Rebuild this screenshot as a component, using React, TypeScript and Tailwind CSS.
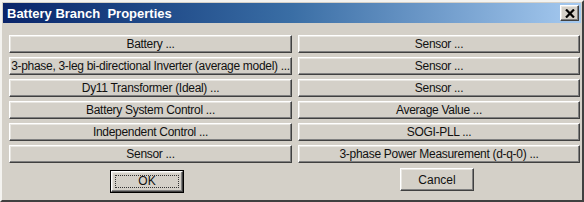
import React from 'react';

const leftItems = [
  'Battery ...',
  '3-phase, 3-leg bi-directional Inverter (average model) ...',
  'Dy11 Transformer (Ideal) ...',
  'Battery System Control ...',
  'Independent Control ...',
  'Sensor ...',
];

const rightItems = [
  'Sensor ...',
  'Sensor ...',
  'Sensor ...',
  'Average Value ...',
  'SOGI-PLL ...',
  '3-phase Power Measurement (d-q-0) ...',
];

// classic raised 3D button edge
const raised =
  'bg-[#d4d0c8] border-t border-l border-t-white border-l-white border-b border-r border-b-[#404040] border-r-[#404040] shadow-[inset_-1px_-1px_0_#808080,inset_1px_1px_0_#e8e6e1]';

function BranchButton({ label }: { label: string }) {
  return (
    <button
      className={`${raised} h-[18px] w-full flex items-center justify-center text-[12px] tracking-[-0.3px] leading-none text-[#111] whitespace-nowrap overflow-hidden`}
    >
      {label}
    </button>
  );
}

export default function App() {
  return (
    <div
      className="w-[584px] h-[202px] bg-[#d4d0c8] border-t-2 border-l-2 border-t-[#f4f3f0] border-l-[#f4f3f0] border-r-2 border-b-2 border-r-[#404040] border-b-[#404040] p-px flex flex-col"
      style={{ fontFamily: '"Liberation Sans", Arial, sans-serif' }}
    >
      {/* Title bar */}
      <div className="h-[20px] bg-gradient-to-r from-[#0a246a] via-[#3a6ea5] to-[#a6caf0] flex items-center justify-between pl-[4px] pr-[2px]">
        <span className="text-white font-bold text-[13px] leading-none whitespace-pre">
          Battery Branch  Properties
        </span>
        <button className={`${raised} w-[19px] h-[16px] flex items-center justify-center`}>
          <svg width="10" height="9" viewBox="0 0 10 9">
            <path d="M1 0.5 L9 8.5 M9 0.5 L1 8.5" stroke="#000" strokeWidth="2.2" fill="none" />
          </svg>
        </button>
      </div>

      {/* Buttons */}
      <div className="grid grid-cols-[283px_282px] gap-x-[6px] gap-y-[4px] pl-[6px] pt-[12px]">
        {leftItems.map((l, i) => (
          <React.Fragment key={i}>
            <BranchButton label={l} />
            <BranchButton label={rightItems[i]} />
          </React.Fragment>
        ))}
      </div>

      {/* OK / Cancel */}
      <div className="grid grid-cols-[283px_282px] gap-x-[6px] pl-[6px] pt-[5px]">
        <div className="pl-[101px]">
          <button className="w-[74px] h-[23px] border border-black p-0">
            <div className={`${raised} w-full h-full flex items-center justify-center p-[3px]`}>
              <div className="w-full h-full border border-dotted border-[#333] flex items-center justify-center text-[12px] text-[#111]">
                OK
              </div>
            </div>
          </button>
        </div>
        <div className="pl-[102px]">
          <button className={`${raised} w-[74px] h-[23px] flex items-center justify-center text-[12px] text-[#111]`}>
            Cancel
          </button>
        </div>
      </div>
    </div>
  );
}
